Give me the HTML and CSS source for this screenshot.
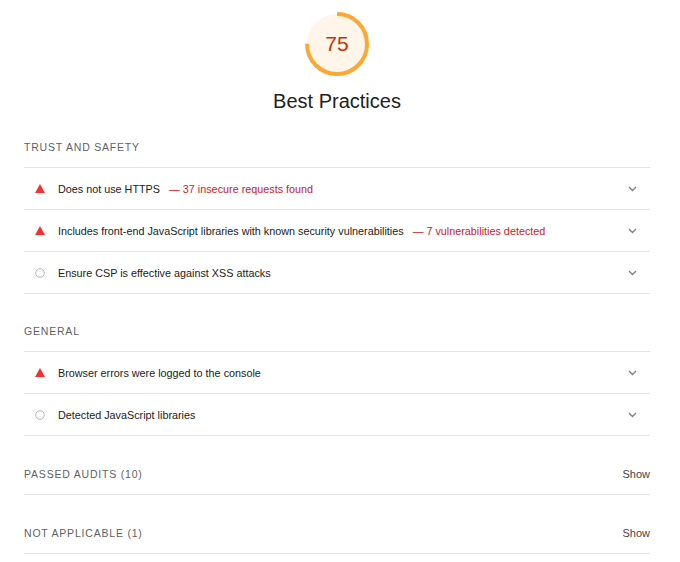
FILE: index.html
```html
<!DOCTYPE html>
<html lang="en">
<head>
<meta charset="utf-8">
<title>Best Practices</title>
<link rel="stylesheet" href="styles.css">
</head>
<body>
<div class="report">
  <div class="category-header">
    <div class="gauge">
      <svg class="gauge-svg" viewBox="0 0 64 64" width="64" height="64">
        <circle class="gauge-base" cx="32" cy="32" r="30"></circle>
        <circle class="gauge-arc" cx="32" cy="32" r="30" stroke-dasharray="141.37 188.5" transform="rotate(-90 32 32)"></circle>
      </svg>
      <span class="gauge-value">75</span>
    </div>
    <h1 class="category-title">Best Practices</h1>
  </div>

  <section class="group">
    <div class="group-title first">Trust and Safety</div>
    <div class="audit">
      <span class="icon"><svg width="10" height="9" viewBox="0 0 10 9"><polygon class="tri" points="5,0 10,9 0,9"/></svg></span>
      <span class="audit-title">Does not use HTTPS</span>
      <span class="display-text">— 37 insecure requests found</span>
      <span class="chevron"><svg width="9" height="6" viewBox="0 0 9 6"><polyline points="1,1 4.5,4.5 8,1"/></svg></span>
    </div>
    <div class="audit">
      <span class="icon"><svg width="10" height="9" viewBox="0 0 10 9"><polygon class="tri" points="5,0 10,9 0,9"/></svg></span>
      <span class="audit-title">Includes front-end JavaScript libraries with known security vulnerabilities</span>
      <span class="display-text">— 7 vulnerabilities detected</span>
      <span class="chevron"><svg width="9" height="6" viewBox="0 0 9 6"><polyline points="1,1 4.5,4.5 8,1"/></svg></span>
    </div>
    <div class="audit">
      <span class="icon"><svg width="10" height="10" viewBox="0 0 10 10"><circle class="info" cx="5" cy="5" r="4.3"/></svg></span>
      <span class="audit-title">Ensure CSP is effective against XSS attacks</span>
      <span class="chevron"><svg width="9" height="6" viewBox="0 0 9 6"><polyline points="1,1 4.5,4.5 8,1"/></svg></span>
    </div>
  </section>

  <section class="group">
    <div class="group-title">General</div>
    <div class="audit">
      <span class="icon"><svg width="10" height="9" viewBox="0 0 10 9"><polygon class="tri" points="5,0 10,9 0,9"/></svg></span>
      <span class="audit-title">Browser errors were logged to the console</span>
      <span class="chevron"><svg width="9" height="6" viewBox="0 0 9 6"><polyline points="1,1 4.5,4.5 8,1"/></svg></span>
    </div>
    <div class="audit">
      <span class="icon"><svg width="10" height="10" viewBox="0 0 10 10"><circle class="info" cx="5" cy="5" r="4.3"/></svg></span>
      <span class="audit-title">Detected JavaScript libraries</span>
      <span class="chevron"><svg width="9" height="6" viewBox="0 0 9 6"><polyline points="1,1 4.5,4.5 8,1"/></svg></span>
    </div>
  </section>

  <section class="group">
    <div class="group-title collapsed"><span>Passed audits <span class="count">(10)</span></span><span class="show">Show</span></div>
  </section>

  <section class="group">
    <div class="group-title collapsed"><span>Not applicable <span class="count">(1)</span></span><span class="show">Show</span></div>
  </section>
</div>
</body>
</html>
```

FILE: styles.css
```css
* {
  box-sizing: border-box;
}

html, body {
  margin: 0;
  padding: 0;
  background: #ffffff;
}

body {
  font-family: "Liberation Sans", Arial, sans-serif;
  color: #212121;
}

.report {
  width: 626px;
  margin-left: 24px;
  padding-top: 12px;
}

.category-header {
  display: flex;
  flex-direction: column;
  align-items: center;
}

.gauge {
  position: relative;
  width: 64px;
  height: 64px;
}

.gauge-svg {
  display: block;
}

.gauge-base {
  fill: #fff5e9;
  stroke: none;
}

.gauge-arc {
  fill: none;
  stroke: #fba834;
  stroke-width: 4;
}

.gauge-value {
  position: absolute;
  left: 0;
  right: 0;
  top: 0;
  bottom: 0;
  display: flex;
  align-items: center;
  justify-content: center;
  font-size: 21px;
  color: #c33300;
  padding-bottom: 1px;
}

.category-title {
  margin: 13px 0 0;
  font-size: 20px;
  line-height: 24px;
  font-weight: normal;
  color: #212121;
}

.group-title {
  font-size: 10.5px;
  line-height: 16px;
  letter-spacing: 0.8px;
  text-transform: uppercase;
  color: #5f5f5f;
  padding: 29px 0 12px;
  border-bottom: 1px solid #e3e3e3;
}

.group-title.first {
  padding-top: 26px;
}

.group-title.collapsed {
  display: flex;
  justify-content: space-between;
  align-items: center;
  padding-top: 30px;
  padding-bottom: 12px;
}

.count {
  letter-spacing: 0.8px;
}

.show {
  font-size: 11px;
  letter-spacing: 0;
  text-transform: none;
  color: #444444;
}

.audit {
  display: flex;
  align-items: center;
  height: 42px;
  border-bottom: 1px solid #e3e3e3;
  font-size: 10.8px;
  line-height: 16px;
}

.icon {
  display: flex;
  align-items: center;
  justify-content: center;
  width: 10px;
  margin-left: 11px;
  margin-right: 13px;
}

.icon svg {
  display: block;
}

.tri {
  fill: #f33333;
}

.info {
  fill: none;
  stroke: #b5b5b5;
  stroke-width: 1;
}

.audit-title {
  color: #212121;
}

.display-text {
  color: #c7221f;
  margin-left: 9px;
}

.chevron {
  margin-left: auto;
  margin-right: 13px;
  display: flex;
}

.chevron svg {
  display: block;
}

.chevron polyline {
  fill: none;
  stroke: #808080;
  stroke-width: 1.4;
}
```
